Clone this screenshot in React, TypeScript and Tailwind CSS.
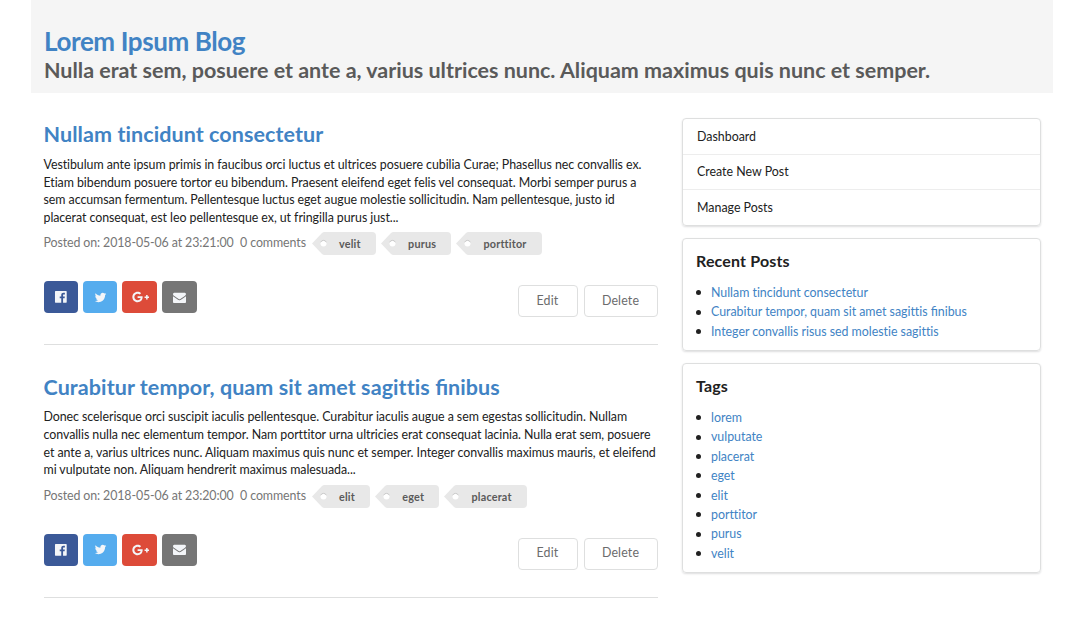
import { Fragment } from "react";
import { FaGooglePlusG } from "react-icons/fa";

type Post = { title: string; lines: string[]; time: string; tags: string[] };

const posts: Post[] = [
  {
    title: "Nullam tincidunt consectetur",
    lines: [
      "Vestibulum ante ipsum primis in faucibus orci luctus et ultrices posuere cubilia Curae; Phasellus nec convallis ex.",
      "Etiam bibendum posuere tortor eu bibendum. Praesent eleifend eget felis vel consequat. Morbi semper purus a",
      "sem accumsan fermentum. Pellentesque luctus eget augue molestie sollicitudin. Nam pellentesque, justo id",
      "placerat consequat, est leo pellentesque ex, ut fringilla purus just...",
    ],
    time: "2018-05-06 at 23:21:00",
    tags: ["velit", "purus", "porttitor"],
  },
  {
    title: "Curabitur tempor, quam sit amet sagittis finibus",
    lines: [
      "Donec scelerisque orci suscipit iaculis pellentesque. Curabitur iaculis augue a sem egestas sollicitudin. Nullam",
      "convallis nulla nec elementum tempor. Nam porttitor urna ultricies erat consequat lacinia. Nulla erat sem, posuere",
      "et ante a, varius ultrices nunc. Aliquam maximus quis nunc et semper. Integer convallis maximus mauris, et eleifend",
      "mi vulputate non. Aliquam hendrerit maximus malesuada...",
    ],
    time: "2018-05-06 at 23:20:00",
    tags: ["elit", "eget", "placerat"],
  },
];

const recent = [
  "Nullam tincidunt consectetur",
  "Curabitur tempor, quam sit amet sagittis finibus",
  "Integer convallis risus sed molestie sagittis",
];
const tags = ["lorem", "vulputate", "placerat", "eget", "elit", "porttitor", "purus", "velit"];

/* Only the fi pair is set as a ligature. */
function Text({ children }: { children: string }) {
  return (
    <>
      {children.split("fi").map((part, i) => (
        <Fragment key={i}>
          {i > 0 && <span className="tracking-normal [font-variant-ligatures:common-ligatures]">fi</span>}
          {part}
        </Fragment>
      ))}
    </>
  );
}

function Glyph({ d, size }: { d: string; size: string }) {
  return (
    <svg viewBox="0 0 1792 1792" fill="currentColor" className={size}>
      <path d={d} />
    </svg>
  );
}

const facebook =
  "M1579 128q35 0 60 25t25 60v1366q0 35-25 60t-60 25h-391v-595h199l30-232h-229v-148q0-56 23.5-84t91.5-28l122-1v-207q-63-9-178-9-136 0-217.500 80t-81.500 226v171h-200v232h200v595h-735q-35 0-60-25t-25-60v-1366q0-35 25-60t60-25h1366z";
const twitter =
  "M1684 408q-67 98-162 167 1 14 1 42 0 130-38 259.500t-115.500 248.500-184.500 210.500-258 146-323 54.500q-271 0-496-145 35 4 78 4 225 0 401-138-105-2-188-64.500t-114-159.500q33 5 61 5 43 0 85-11-112-23-185.500-111.500t-73.500-205.500v-4q68 38 146 41-66-44-105-115t-39-154q0-88 44-163 121 149 294.500 238.500t371.500 99.500q-8-38-8-74 0-134 94.500-228.500t228.500-94.500q140 0 236 102 109-21 205-78-37 115-142 178 93-10 186-50z";
const envelope =
  "M1792 710v794q0 66-47 113t-113 47h-1472q-66 0-113-47t-47-113v-794q44 49 101 87 362 246 497 345 57 42 92.500 65.500t94.500 48 110 24.500h2q51 0 110-24.500t94.500-48 92.500-65.500q170-123 498-345 57-39 100-87zm0-294q0 79-49 151t-122 123q-376 261-468 325-10 7-42.500 31t-54 38.500-52 32.500-57.500 27-50 9h-2q-23 0-50-9t-57.500-27-52-32.500-54-38.500-42.500-31q-91-64-262-182.500t-205-142.500q-62-42-117-115.500t-55-136.500q0-78 41.500-130t118.500-52h1472q65 0 112.500 47t47.500 113z";

function Tag({ name }: { name: string }) {
  return (
    <a className="flex h-[23px] items-center">
      <svg viewBox="0 0 27 23" className="h-[23px] w-[27px] shrink-0">
        <path d="M27 0H12.500Q11 0 10 1L0 11.500L10 22Q11 23 12.500 23H27Z" fill="#e8e8e8" />
        <circle cx="11.500" cy="11.500" r="3" fill="#fff" />
        <path d="M8.700 10.300A3 3 0 0 1 14.300 10.300" fill="none" stroke="#c4c4c4" strokeWidth="0.900" />
      </svg>
      <span className="flex h-[23px] items-center rounded-r-[4px] bg-[#e8e8e8] pt-px pr-[15px] pl-[0.500px] text-[10.800px] font-bold tracking-[0.200px] text-[#5a5a5a]">
        {name}
      </span>
    </a>
  );
}

function Article({ post }: { post: Post }) {
  return (
    <article className="h-[252.500px]">
      <div className="flex h-[227px] flex-col border-b border-[#dedfdf]">
        <h2 className="h-[37.800px] text-[21.500px] leading-[32px] font-bold tracking-[0.080px] text-[#4183c4]">
          <Text>{post.title}</Text>
        </h2>
        <div className="text-[12.400px] leading-[17.700px] tracking-[-0.058px] text-[#212121]">
          {post.lines.map((line) => (
            <p key={line}>
              <Text>{line}</Text>
            </p>
          ))}
        </div>
        <div className="mt-[5.700px] flex h-[23px] items-center text-[12.400px] tracking-[-0.110px] text-[#767676]">
          <span className="w-[196.500px]">Posted on: {post.time}</span>
          <span className="w-[71.500px] tracking-[-0.080px]">0 comments</span>
          <div className="flex gap-[4.800px]">
            {post.tags.map((t) => (
              <Tag key={t} name={t} />
            ))}
          </div>
        </div>
        <div className="mt-[26px] flex items-start">
          <div className="flex gap-[5px] text-[#f3f5f8]">
            <button className="flex h-8 w-[34.500px] items-center justify-center rounded-[4px] bg-[#3b5998]">
              <Glyph d={facebook} size="size-[13.700px]" />
            </button>
            <button className="flex h-8 w-[34px] items-center justify-center rounded-[4px] bg-[#55acee]">
              <Glyph d={twitter} size="size-[13px]" />
            </button>
            <button className="flex h-8 w-[34.500px] items-center justify-center rounded-[4px] bg-[#dd4b39] pl-[2px]">
              <FaGooglePlusG className="h-[14px] w-[17.500px]" />
            </button>
            <button className="flex h-8 w-[35px] items-center justify-center rounded-[4px] bg-[#767676] pl-px">
              <Glyph d={envelope} size="size-[13px]" />
            </button>
          </div>
          <div className="mt-[4px] ml-auto flex gap-[6px] text-[12.400px] tracking-[0.150px] text-[#6b6c6d]">
            <button className="h-8 w-[60px] rounded-[4px] border border-[#dedfdf]">Edit</button>
            <button className="h-8 w-[74px] rounded-[4px] border border-[#dedfdf]">Delete</button>
          </div>
        </div>
      </div>
    </article>
  );
}

const card = "rounded-[4px] border border-[#dedfdf] shadow-[0_1px_2px_0_rgba(34,36,38,0.15)]";

function ListCard({ title, items, size }: { title: string; items: string[]; size: string }) {
  return (
    <section className={`${card} mt-3 px-[13px] pt-[12px] ${size}`}>
      <h3 className="h-[32px] text-[16px] leading-[20px] font-bold tracking-[0.150px] text-[#212121]">{title}</h3>
      <ul className="text-[12.400px] leading-[19.400px] tracking-[-0.020px] text-[#4183c4]">
        {items.map((item) => (
          <li key={item} className="flex items-center">
            <i className="mr-[10px] size-[5px] rounded-full bg-[#212121]" />
            <a>
              <Text>{item}</Text>
            </a>
          </li>
        ))}
      </ul>
    </section>
  );
}

export default function App() {
  return (
    <div className="h-[624px] overflow-hidden bg-white pl-[31px] font-['Lato',sans-serif] whitespace-nowrap [font-variant-ligatures:none]">
      <header className="h-[93px] w-[1022px] bg-[#f5f5f5] pt-[25px] pl-[13px]">
        <h1 className="h-[29px] text-[26px] leading-[32px] font-bold tracking-[-0.400px] text-[#4183c4]">
          Lorem Ipsum Blog
        </h1>
        <p className="text-[21.500px] leading-[32px] font-bold tracking-[-0.010px] text-[#5a5a5a]">
          Nulla erat sem, posuere et ante a, varius ultrices nunc. Aliquam maximus quis nunc et semper.
        </p>
      </header>
      <div className="flex w-[1009.500px] justify-between pt-[25px] pl-[12.500px]">
        <main className="w-[614px]">
          {posts.map((post) => (
            <Article key={post.title} post={post} />
          ))}
        </main>
        <aside className="w-[358.500px]">
          <nav className={`${card} flex h-[108px] flex-col text-[12.400px] text-[#212121]`}>
            <a className="flex flex-1 items-center border-b border-[#ededed] pt-px pl-[14px]">Dashboard</a>
            <a className="flex flex-1 items-center border-b border-[#ededed] pt-px pl-[14px]">Create New Post</a>
            <a className="flex flex-1 items-center pt-px pl-[14px]">Manage Posts</a>
          </nav>
          <ListCard title="Recent Posts" items={recent} size="h-[113px]" />
          <ListCard title="Tags" items={tags} size="h-[210px]" />
        </aside>
      </div>
    </div>
  );
}
